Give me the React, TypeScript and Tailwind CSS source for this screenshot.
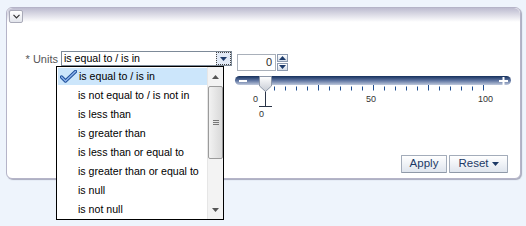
const options = [
	"is equal to / is in",
	"is not equal to / is not in",
	"is less than",
	"is greater than",
	"is less than or equal to",
	"is greater than or equal to",
	"is null",
	"is not null",
];

// ticks every 5 units, 11px apart; long tick every 25
const ticks = Array.from({ length: 20 }, (_, i) => i + 1);

function CheckIcon() {
	return (
		<svg width="17" height="13" viewBox="0 0 17 13" className="shrink-0">
			<path d="M1.5 7 L5.5 11 L15.5 1.5" fill="none" stroke="#1d4f9a" strokeWidth="3.4" strokeLinecap="round" strokeLinejoin="round" />
			<path d="M1.5 7 L5.5 11 L15.5 1.5" fill="none" stroke="#8fb4ec" strokeWidth="1.4" strokeLinecap="round" strokeLinejoin="round" />
		</svg>
	);
}

function Tri({ down = true, color = "#1d3b6b" }: { down?: boolean; color?: string }) {
	return (
		<svg width="7" height="4" viewBox="0 0 7 4">
			<path d={down ? "M0 0 H7 L3.5 4 Z" : "M0 4 H7 L3.5 0 Z"} fill={color} />
		</svg>
	);
}

function OptionList() {
	return (
		<div className="absolute left-[-6px] top-[14px] z-10 flex w-[168px] h-[154px] border border-black bg-white text-[10.6px]">
			<div className="flex-1 flex flex-col">
				{options.map((opt, i) => (
					<div key={opt} className="h-[19px] flex items-center">
						{i === 0 ? (
							<div className="flex items-center h-[17px] w-full ml-[1px] bg-[#cce6fb] pl-[2px]">
								<CheckIcon />
								<span className="ml-[2px]">{opt}</span>
							</div>
						) : (
							<span className="pl-[21px]">{opt}</span>
						)}
					</div>
				))}
			</div>
			<div className="w-[16px] flex flex-col items-center bg-[#f3f3f3] border-l border-[#e6e6e6]">
				<div className="h-[18px] flex items-center justify-center pt-[2px]">
					<Tri down={false} color="#555" />
				</div>
				<div className="mt-[1px] w-[15px] h-[73px] rounded-[2px] border border-[#9b9b9b] bg-gradient-to-r from-[#f2f2f2] to-[#d9d9d9] flex flex-col items-center justify-center gap-[1px]">
					<div className="w-[6px] h-px bg-[#777]" />
					<div className="w-[6px] h-px bg-[#777]" />
					<div className="w-[6px] h-px bg-[#777]" />
				</div>
				<div className="mt-auto h-[18px] flex items-center justify-center">
					<Tri color="#555" />
				</div>
			</div>
		</div>
	);
}

function Slider() {
	return (
		<div className="relative w-[276px] h-[46px] mt-[5px]">
			<div className="h-[9px] rounded-full bg-gradient-to-b from-[#15305c] via-[#5e74a0] to-[#c0c9dc] flex items-center justify-between pl-[4px] pr-[3px]">
				<div className="w-[8px] h-[2px] bg-white" />
				<svg width="9" height="8" viewBox="0 0 9 8">
					<path d="M0 4 H9 M4.5 0 V8" stroke="white" strokeWidth="2" />
				</svg>
			</div>
			<svg width="276" height="46" viewBox="0 0 276 46" className="absolute left-0 top-0">
				{ticks.map((k) => (
					<line
						key={k}
						x1={28.5 + 11 * k}
						x2={28.5 + 11 * k}
						y1={k % 5 === 0 ? 9 : 10.5}
						y2={14.5}
						stroke="#1f4d8f"
						strokeWidth="1"
					/>
				))}
				<line x1="30.5" x2="30.5" y1="15" y2="31" stroke="#2a3447" />
				<line x1="24" x2="37" y1="30.5" y2="30.5" stroke="#2a3447" />
				<defs>
					<linearGradient id="thumb" x1="0" x2="0" y1="0" y2="1">
						<stop offset="0" stopColor="#ffffff" />
						<stop offset="1" stopColor="#c5cad3" />
					</linearGradient>
				</defs>
				<path d="M24.5 0.5 H36.5 V10 L30.5 15.5 L24.5 10 Z" fill="url(#thumb)" stroke="#8d97a8" />
			</svg>
			<span className="absolute left-[18px] top-[19px] text-[9px] leading-[9px] text-[#333]">0</span>
			<span className="absolute left-[131px] top-[19px] text-[9px] leading-[9px] text-[#333]">50</span>
			<span className="absolute left-[243px] top-[19px] text-[9px] leading-[9px] text-[#333]">100</span>
			<span className="absolute left-[24px] top-[34px] text-[9px] leading-[9px] text-[#333]">0</span>
		</div>
	);
}

function Button({ label, menu }: { label: string; menu?: boolean }) {
	return (
		<div className="h-[18px] flex items-center justify-center gap-[3px] border border-[#a3acba] border-b-[#8f99a8] rounded-[1px] bg-gradient-to-b from-white to-[#dfe5ee] text-[#1c3966] text-[11.5px]">
			<span>{label}</span>
			{menu && <Tri color="#1c3966" />}
		</div>
	);
}

export default function App() {
	return (
		<div className="w-[526px] h-[226px] overflow-hidden bg-[#eef4fc] pt-[7px] pl-[6px] font-['Liberation_Sans',Arial,sans-serif] text-[11px] text-black">
			<div className="relative w-[515px] h-[172px] flex flex-col rounded-[6px] border border-[#b5b4c8] bg-white shadow-[1px_1px_1px_rgba(80,80,110,0.45)]">
				<div className="h-[14px] pl-[2px] pt-[2px] rounded-t-[6px] bg-gradient-to-b from-[#bdbcd0] to-white">
					<div className="w-[14px] h-[13px] rounded-[2px] border border-[#a9aab8] bg-gradient-to-b from-white to-[#e3e5ec] flex items-center justify-center">
						<svg width="7" height="5" viewBox="0 0 7 5">
							<path d="M0.5 0.8 L3.5 3.8 L6.5 0.8" fill="none" stroke="#333" strokeWidth="1.2" />
						</svg>
					</div>
				</div>

				<div className="flex items-start mt-[29px]">
					<div className="w-[54px] pr-[3px] text-right text-[#555] leading-[15px] pt-[1px]">* Units</div>
					<div className="relative w-[171px] h-[15px] border border-[#7d8a98] flex items-center bg-white">
						<span className="pl-[2px] flex-1 leading-[13px] text-[10.6px]">is equal to / is in</span>
						<div className="w-[15px] h-[13px] border border-dotted border-[#444] bg-[#e2eaf6] flex items-center justify-center">
							<Tri />
						</div>
						<OptionList />
					</div>
					<div className="ml-[3px] mt-[3px] flex flex-col">
						<div className="flex ml-[2px] gap-[1px]">
							<div className="w-[39px] h-[17px] border border-[#a9b0ba] flex items-center justify-end pr-[3px] text-[#2b2b2b]">0</div>
							<div className="flex flex-col gap-[1px]">
								<div className="w-[11px] h-[8px] border border-[#8d9bb1] bg-gradient-to-b from-white to-[#d4dde9] flex items-center justify-center">
									<Tri down={false} />
								</div>
								<div className="w-[11px] h-[8px] border border-[#8d9bb1] bg-gradient-to-b from-white to-[#d4dde9] flex items-center justify-center">
									<Tri />
								</div>
							</div>
						</div>
						<Slider />
					</div>
				</div>

				<div className="mt-auto mb-[5px] mr-[12px] flex justify-end gap-[2px]">
					<div className="w-[46px]">
						<Button label="Apply" />
					</div>
					<div className="w-[59px]">
						<Button label="Reset" menu />
					</div>
				</div>
			</div>
		</div>
	);
}
